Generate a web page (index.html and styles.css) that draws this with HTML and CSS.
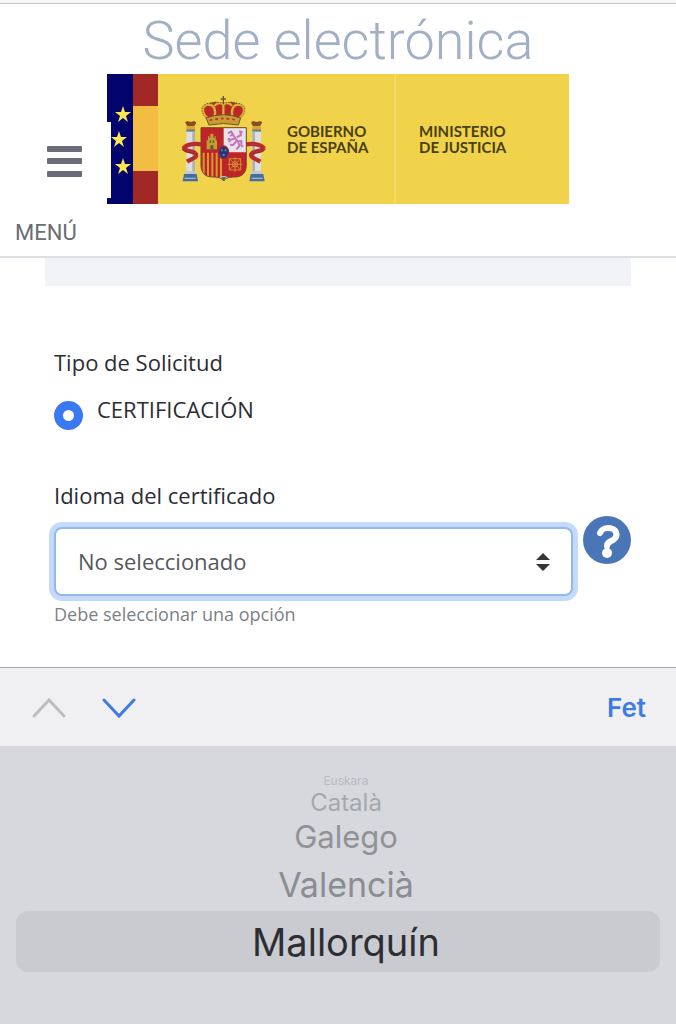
FILE: index.html
```html
<!DOCTYPE html>
<html lang="es">
<head>
<meta charset="utf-8">
<meta name="viewport" content="width=device-width, initial-scale=1">
<title>Sede electrónica</title>
<link rel="stylesheet" href="styles.css">
</head>
<body>
<div class="screen">
  <header class="header">
    <button class="menu" type="button">
      <svg class="menu-icon" viewBox="0 0 35 31" aria-hidden="true"><rect width="35" height="6" rx="1"/><rect y="12" width="35" height="6" rx="1"/><rect y="25" width="35" height="6" rx="1"/></svg>
      <span>MENÚ</span>
    </button>
    <div class="brand">
      <h1 class="title">Sede electrónica</h1>
      <div class="banner">
        <svg class="flags" viewBox="0 0 51 130" aria-hidden="true">
          <path fill="#03036d" d="M0 0h26v130H0z"/><path fill="#fff" d="M0 48h4v76H0z"/>
          <path fill="#a12825" d="M26 0h25v130H26z"/><path fill="#f2bd42" d="M26 32h25v65H26z"/>
          <g fill="#fbe84e">
            <path id="star" d="M16 32l2 6h6l-5 4 2 6-5-4-5 4 2-6-5-4h6z"/>
            <use href="#star" x="-4" y="25"/><use href="#star" y="52"/>
          </g>
        </svg>
        <svg class="arms" viewBox="33 24 258 264" aria-hidden="true">
          <g stroke="#6c5426" stroke-width="3">
            <path fill="#bd2827" d="M112 92C90 74 94 52 116 51c17-6 27-6 44-2 17-4 27-4 44 2 22 1 26 23 5 41z"/>
            <path fill="none" stroke="#d4b139" stroke-width="7" d="M113 94C92 75 96 54 116 53c16 0 22 15 18 36M208 94c21-19 17-40-3-41-16 0-22 15-18 36M134 56c9-10 20-9 26-2 6-7 17-8 26 2M160 50v42"/>
            <path fill="none" stroke-dasharray="3 5" d="M109 94C88 75 92 51 116 49c16-6 28-4 44 0 16-4 28-6 44 0 24 2 28 26 7 45"/>
            <path fill="none" stroke-width="4" d="M160 27v25M152 36h16"/>
            <path fill="#c99a35" d="M108 93q52-20 104 0l-7 21q-44-9-88 0z"/>
            <path fill="none" stroke="#b5322b" stroke-width="5" stroke-dasharray="8 9" d="M119 100q42-11 83 0"/>
          </g>
          <g id="pillar">
            <path fill="#8a4d25" d="M45 106l7-4 10 3 11-3 6 5-6 11H52z"/><path fill="#d5a72f" d="M49 118h26v9H49z"/>
            <path fill="#777984" d="M49 127h26v8H49z"/><path fill="#dedfe0" d="M49 134h26v119H49z"/><path fill="#aeb0b7" d="M67 134h8v119h-8z"/>
            <path fill="#c4c6c8" d="M46 252h31v11H46z"/><path fill="#466ca2" d="M42 261h38l4 22H38z"/><path fill="#9bb6bd" d="M44 272h33v4H44z"/>
            <path fill="none" stroke="#b92c2e" stroke-width="13" d="M94 172c-20-3-46-1-54 13M40 183c6 12 34 7 38 19 4 10-13 13-27 22"/>
            <path fill="none" stroke="#7c2323" stroke-width="2" d="M40 190c8 9 29 5 34 13"/>
          </g>
          <use href="#pillar" transform="matrix(-1 0 0 1 322 0)"/>
          <clipPath id="shield"><path d="M93 122h136v112c0 25-14 36-35 36-17 0-27 3-33 12-6-9-16-12-33-12-21 0-35-11-35-36z"/></clipPath>
          <g clip-path="url(#shield)">
            <path fill="#bd2529" d="M93 122h136v160H93z"/><path fill="#e8e3e7" d="M161 122h68v74h-68z"/>
            <path stroke="#d59b31" stroke-width="6" d="M101 197v80M114 197v80M127 197v80M140 197v80M153 197v80"/>
            <path fill="#d9dacc" d="M139 282q0-11 22-15 22 4 22 15z"/><path fill="#46734b" d="M154 270h14l-7 12z"/>
          </g>
          <path fill="#bda130" d="M110 187v-27h4v-12h4v5h3v-13h9v13h3v-5h4v12h4v27z"/><path fill="#595c2b" d="M119 160h4v8h-4zM128 160h4v8h-4zM121 187v-12h9v12z"/>
          <path fill="none" stroke="#c971c0" stroke-width="6" stroke-linejoin="round" d="M174 139l9-6 6 9-9 5M187 140l9 14-13 4-7 7M193 153l12 11 9-3M199 163l-10 11-9-1M204 163l4 14-9 10M200 151l13-7-3-11 8 4M214 160v15l5 4M180 157l-7-2"/>
          <g fill="none" stroke="#cf8e30" stroke-width="3"><circle cx="195" cy="232" r="8"/><path d="M178 215h34v34h-34zM178 215l34 34M212 215l-34 34M195 210v45M173 232h44"/></g>
          <path fill="none" stroke="#7a4230" stroke-width="3" d="M93 122h136v112c0 25-14 36-35 36-17 0-27 3-33 12-6-9-16-12-33-12-21 0-35-11-35-36z"/>
          <ellipse cx="161" cy="196" rx="15" ry="19" fill="#203780" stroke="#9c2641" stroke-width="4"/><path fill="#777e9d" d="M153 187h5v6h-5zM164 187h5v6h-5zM158 201h6v6h-6z"/>
        </svg>
        <p class="entity government">GOBIERNO<br>DE ESPAÑA</p>
        <p class="entity ministry">MINISTERIO<br>DE JUSTICIA</p>
      </div>
    </div>
  </header>

  <main class="content">
    <div class="strip"></div>
    <form class="form">
      <fieldset class="group">
        <legend class="label">Tipo de Solicitud</legend>
        <label class="choice"><input class="radio" type="radio" name="tipo" checked><span>CERTIFICACIÓN</span></label>
      </fieldset>
      <label class="label" for="idioma">Idioma del certificado</label>
      <div class="field">
        <select class="select" id="idioma" aria-describedby="hint"><option>No seleccionado</option><option>Euskara</option><option>Català</option><option>Galego</option><option>Valencià</option><option>Mallorquín</option></select>
        <svg class="arrows" viewBox="0 0 14 18" aria-hidden="true"><path d="M7 0l7 7H0zM0 11h14l-7 7z"/></svg>
        <button class="help" type="button" aria-label="Ayuda">
          <svg viewBox="0 0 48 48" aria-hidden="true"><circle cx="24" cy="24" r="24" fill="#4a76b8"/><path d="M17 17c2-4 4-5 8-5 9 0 11 8 5 12-4 2-6 3-6 6" fill="none" stroke="#fff" stroke-width="6" stroke-linecap="round"/><circle cx="24" cy="37" r="5" fill="#fff"/></svg>
        </button>
      </div>
      <p class="hint" id="hint">Debe seleccionar una opción</p>
    </form>
  </main>

  <section class="keyboard" aria-label="Selector">
    <div class="toolbar">
      <button class="step previous" type="button" aria-label="Anterior" disabled><svg viewBox="0 0 34 22" aria-hidden="true"><path d="M2 19L17 3l15 16"/></svg></button>
      <button class="step" type="button" aria-label="Siguiente"><svg viewBox="0 0 34 22" aria-hidden="true"><path d="M2 3l15 16L32 3"/></svg></button>
      <button class="done" type="button">Fet</button>
    </div>
    <div class="picker">
      <button class="option farthest" type="button">Euskara</button>
      <button class="option far" type="button">Català</button>
      <button class="option near" type="button">Galego</button>
      <button class="option next" type="button">Valencià</button>
      <button class="option selected" type="button">Mallorquín</button>
    </div>
  </section>
</div>
</body>
</html>
```
FILE: styles.css
```css
* { box-sizing: border-box; }
body { margin: 0; background: #fff; color: #2b2d33; font-family: "Open Sans", "Noto Sans", sans-serif; }
button { margin: 0; padding: 0; border: 0; background: none; font: inherit; color: inherit; }
svg { display: block; }
h1, p { margin: 0; }
.screen { display: flex; flex-direction: column; min-height: 100vh; }

.header { display: grid; grid-template-columns: 1fr minmax(0, 462px) 1fr; border-top: 4px solid #c6c6c8; border-bottom: 2px solid #dedfe5; position: relative; }
.header::before { content: ""; position: absolute; inset: -4px 0 auto; height: 3px; background: #f6f6f6; }
.menu { display: flex; flex-direction: column; justify-content: flex-end; align-items: flex-start; gap: 43px; padding: 0 0 10px 15px; font: 22px/26px Roboto, sans-serif; color: #6b6c76; }
.menu-icon { width: 35px; height: 31px; margin-left: 32px; fill: #6b6c78; flex: none; }
.brand { padding-bottom: 52px; }
.title { height: 70px; font: 300 54px/74px Roboto, sans-serif; color: #a3afc6; text-align: center; white-space: nowrap; }
.banner { display: flex; align-items: center; height: 130px; background: #f0d34a; }
.flags { width: 51px; height: 130px; flex: none; }
.arms { width: 86px; height: 88px; margin-left: 23px; flex: none; }
.entity { display: flex; align-items: center; height: 100%; font: 700 15px/16px Lato, sans-serif; color: #4b3f12; white-space: nowrap; }
.government { flex: 0 0 129px; padding-left: 20px; border-right: 2px solid #f4dc62; }
.ministry { padding-left: 23px; }

.content { flex: 1; padding: 0 45px; }
.strip { height: 28px; background: #f2f3f7; }
.form { padding: 61px 0 0 9px; }
.group { margin: 0; padding: 0; border: 0; }
.label { display: block; padding: 0; font-size: 22px; line-height: 30px; }
.choice { display: flex; align-items: flex-start; gap: 14px; margin: 17px 0 50px; font-size: 22px; line-height: 30px; }
.radio { appearance: none; width: 29px; height: 29px; margin: 7px 0 0; border: 9px solid #397af2; border-radius: 50%; background: #fff; }
.field { display: grid; grid-template-columns: minmax(0, 1fr) 48px; column-gap: 10px; align-items: center; margin-top: 17px; }
.select { appearance: none; grid-area: 1 / 1; height: 69px; padding: 0 22px 2px; border: 2px solid #8fb9ef; border-radius: 8px; outline: 0; box-shadow: 0 0 0 5px #c5dafa; background: #fff; color: #555860; font: 22px/30px "Open Sans", "Noto Sans", sans-serif; }
.arrows { grid-area: 1 / 1; justify-self: end; width: 14px; height: 18px; margin-right: 23px; fill: #34363b; pointer-events: none; }
.help { grid-area: 1 / 2; align-self: start; width: 48px; height: 48px; margin-top: -11px; }
.hint { margin-top: 5px; font-size: 18px; line-height: 26px; color: #7d8087; }

.keyboard { font-family: Inter, sans-serif; }
.toolbar { display: flex; align-items: center; gap: 36px; height: 79px; padding: 2px 30px 0 32px; border-top: 1px solid #a5a6ab; background: #f0f0f3; }
.step svg { width: 34px; height: 22px; fill: none; stroke: #3e7be4; stroke-width: 3; stroke-linecap: round; }
.previous svg { stroke: #bdbdbf; }
.done { margin-left: auto; font-size: 26px; line-height: 32px; font-weight: 600; color: #3e7be4; }
.picker { display: flex; flex-direction: column; height: 278px; padding: 28px 16px 0; background: #d6d8dd; }
.option { padding-left: 16px; flex: none; text-align: center; }
.farthest { height: 14px; font-size: 12px; line-height: 14px; color: #b8babf; }
.far { height: 30px; font-size: 24px; line-height: 30px; color: #a5a7ac; }
.near { height: 38px; font-size: 31px; line-height: 38px; color: #909297; }
.next { height: 55px; font-size: 34px; line-height: 58px; color: #8b8d92; }
.selected { height: 61px; border-radius: 12px; background: #cacbd0; font-size: 38px; line-height: 62px; color: #2c2e33; }
```
